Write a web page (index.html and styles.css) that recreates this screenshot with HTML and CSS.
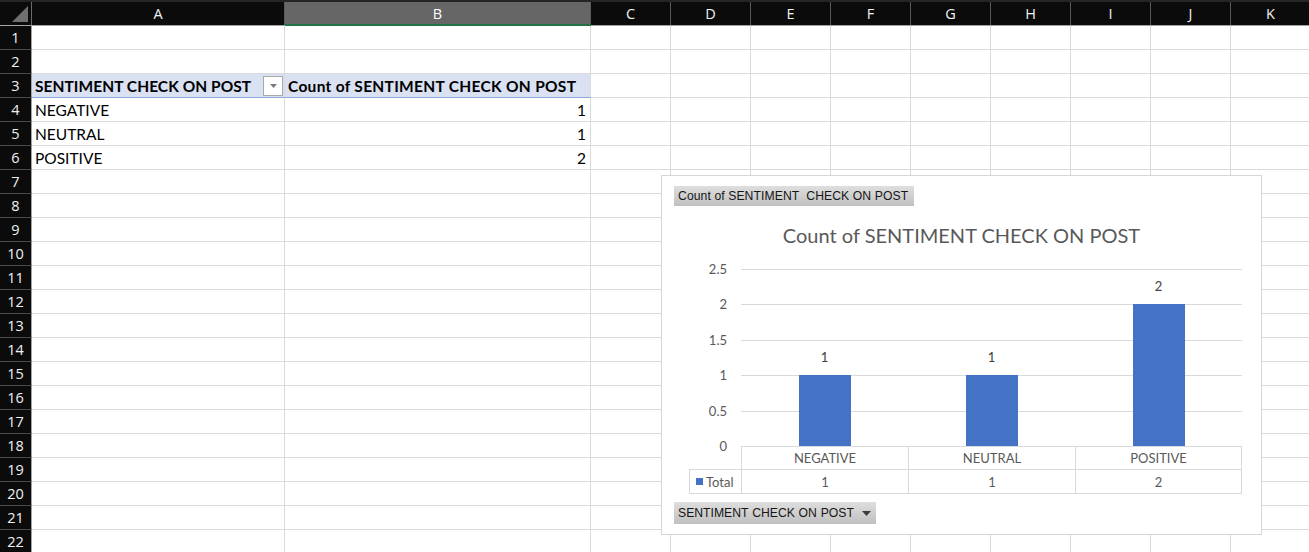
FILE: index.html
```html
<!DOCTYPE html>
<html>
<head>
<meta charset="utf-8">
<title>Sentiment pivot</title>
<link rel="stylesheet" href="styles.css">
</head>
<body>
<div class="sheet">
  <div class="hdr">
    <div class="corner"><svg width="31" height="23" viewBox="0 0 31 23"><polygon points="28,4 28,20 12,20" fill="#6f6f6f"/></svg></div>
    <div class="ch ca">A</div>
    <div class="ch cb sel">B</div>
    <div class="ch cn">C</div>
    <div class="ch cn">D</div>
    <div class="ch cn">E</div>
    <div class="ch cn">F</div>
    <div class="ch cn">G</div>
    <div class="ch cn">H</div>
    <div class="ch cn">I</div>
    <div class="ch cn">J</div>
    <div class="ch cn">K</div>
  </div>
  <div class="row"><div class="rh">1</div><div class="c ca"></div><div class="c cb"></div><div class="rest"></div></div>
  <div class="row"><div class="rh">2</div><div class="c ca"></div><div class="c cb"></div><div class="rest"></div></div>
  <div class="row"><div class="rh">3</div><div class="c ca pv">SENTIMENT CHECK ON POST<span class="filter"><svg width="7" height="4" viewBox="0 0 7 4"><polygon points="0,0 7,0 3.5,4" fill="#7a7a7a"/></svg></span></div><div class="c cb pv pvb">Count of SENTIMENT CHECK ON POST</div><div class="rest"></div></div>
  <div class="row"><div class="rh">4</div><div class="c ca">NEGATIVE</div><div class="c cb num">1</div><div class="rest"></div></div>
  <div class="row"><div class="rh">5</div><div class="c ca">NEUTRAL</div><div class="c cb num">1</div><div class="rest"></div></div>
  <div class="row"><div class="rh">6</div><div class="c ca">POSITIVE</div><div class="c cb num">2</div><div class="rest"></div></div>
  <div class="row"><div class="rh">7</div><div class="c ca"></div><div class="c cb"></div><div class="rest"></div></div>
  <div class="row"><div class="rh">8</div><div class="c ca"></div><div class="c cb"></div><div class="rest"></div></div>
  <div class="row"><div class="rh">9</div><div class="c ca"></div><div class="c cb"></div><div class="rest"></div></div>
  <div class="row"><div class="rh">10</div><div class="c ca"></div><div class="c cb"></div><div class="rest"></div></div>
  <div class="row"><div class="rh">11</div><div class="c ca"></div><div class="c cb"></div><div class="rest"></div></div>
  <div class="row"><div class="rh">12</div><div class="c ca"></div><div class="c cb"></div><div class="rest"></div></div>
  <div class="row"><div class="rh">13</div><div class="c ca"></div><div class="c cb"></div><div class="rest"></div></div>
  <div class="row"><div class="rh">14</div><div class="c ca"></div><div class="c cb"></div><div class="rest"></div></div>
  <div class="row"><div class="rh">15</div><div class="c ca"></div><div class="c cb"></div><div class="rest"></div></div>
  <div class="row"><div class="rh">16</div><div class="c ca"></div><div class="c cb"></div><div class="rest"></div></div>
  <div class="row"><div class="rh">17</div><div class="c ca"></div><div class="c cb"></div><div class="rest"></div></div>
  <div class="row"><div class="rh">18</div><div class="c ca"></div><div class="c cb"></div><div class="rest"></div></div>
  <div class="row"><div class="rh">19</div><div class="c ca"></div><div class="c cb"></div><div class="rest"></div></div>
  <div class="row"><div class="rh">20</div><div class="c ca"></div><div class="c cb"></div><div class="rest"></div></div>
  <div class="row"><div class="rh">21</div><div class="c ca"></div><div class="c cb"></div><div class="rest"></div></div>
  <div class="row"><div class="rh">22</div><div class="c ca"></div><div class="c cb"></div><div class="rest"></div></div>

  <div class="chart">
    <div class="fbtn">Count of SENTIMENT&nbsp; CHECK ON POST</div>
    <div class="title">Count of SENTIMENT CHECK ON POST</div>
    <div class="plot">
      <div class="yax"><span>2.5</span><span>2</span><span>1.5</span><span>1</span><span>0.5</span><span>0</span></div>
      <div class="area">
        <div class="gl"></div><div class="gl"></div><div class="gl"></div><div class="gl"></div><div class="gl"></div>
        <div class="bars">
          <div class="bcol"><span class="dl">1</span><div class="bar" style="height:71px"></div></div>
          <div class="bcol"><span class="dl">1</span><div class="bar" style="height:71px"></div></div>
          <div class="bcol"><span class="dl">2</span><div class="bar" style="height:142px"></div></div>
        </div>
      </div>
      <div class="blank"></div>
      <div class="tc">NEGATIVE</div>
      <div class="tc">NEUTRAL</div>
      <div class="tc last">POSITIVE</div>
      <div class="tc tr2 leg"><span class="sw"></span>Total</div>
      <div class="tc tr2">1</div>
      <div class="tc tr2">1</div>
      <div class="tc tr2 last">2</div>
    </div>
    <div class="fbtn fbtn2">SENTIMENT&nbsp; CHECK&nbsp; ON&nbsp; POST<svg class="dd" width="9" height="5" viewBox="0 0 9 5"><polygon points="0,0 9,0 4.5,5" fill="#3c3c3c"/></svg></div>
  </div>
</div>
</body>
</html>
```

FILE: styles.css
```css
* { box-sizing: border-box; margin: 0; padding: 0; }
body { margin: 0; background: #ffffff; overflow: hidden; font-family: Lato, "Liberation Sans", sans-serif; }

.sheet { position: relative; width: 1309px; height: 552px; overflow: hidden; background: #fff; }

/* column header */
.hdr { display: flex; height: 26px; background: #0b0b0b; border-top: 2px solid #252525; border-bottom: 1px solid #a3a3a3; }
.corner { width: 32px; flex: none; border-right: 1px solid #6a6a6a; }
.corner svg { display: block; }
.ch { display: flex; align-items: center; justify-content: center; font-family: "Open Sans", sans-serif; font-size: 14.5px; color: #f2f2f2; border-right: 1px solid #5a5a5a; }
.ch.sel { background: #666666; position: relative; color: #ffffff; }
.ch.sel::after { content: ""; position: absolute; left: 0; right: -1px; bottom: -1px; height: 2px; background: #217346; }
.ca { width: 253px; flex: none; }
.cb { width: 306px; flex: none; }
.cn { width: 80px; flex: none; }

/* rows */
.row { display: flex; height: 24px; }
.rh { width: 32px; flex: none; background: #0b0b0b; color: #f0f0f0; font-family: "Open Sans", sans-serif; font-size: 14.5px; display: flex; align-items: center; justify-content: center; border-right: 1px solid #a3a3a3; border-bottom: 1px solid #4a4a4a; }
.c { border-right: 1px solid #dadada; border-bottom: 1px solid #dadada; font-size: 15.5px; display: flex; align-items: center; padding: 1px 3px 0; color: #000; white-space: nowrap; }
.num { justify-content: flex-end; padding-right: 4px; }
.pv { background: #d9e1f2; border-bottom-color: #8ea9db; font-weight: 700; letter-spacing: 0.05px; }
.pvb { letter-spacing: 0.3px; }
.rest { flex: 1; border-bottom: 1px solid #dadada; background: repeating-linear-gradient(to right, transparent 0 79px, #dadada 79px 80px); }

.filter { margin-left: auto; margin-right: -2px; width: 20px; height: 20px; border: 1px solid #a9a9a9; background: #fff; display: flex; align-items: center; justify-content: center; }
.filter svg { display: block; }

/* chart */
.chart { position: absolute; left: 661px; top: 175px; width: 601px; height: 360px; background: #fff; border: 1px solid #d6d6d6; padding: 10px 12px; display: flex; flex-direction: column; align-items: flex-start; color: #595959; font-family: Lato, "Liberation Sans", sans-serif; }

.fbtn { height: 20px; padding: 0 6px 0 4px; font-family: "Liberation Sans", sans-serif; font-size: 12.2px; letter-spacing: 0.08px; color: #161616; background: linear-gradient(#dedede, #c0c0c0); display: flex; align-items: center; white-space: nowrap; }
.fbtn2 { height: 22px; margin-top: 8px; letter-spacing: 0; word-spacing: -1.5px; padding-right: 5px; }
.dd { margin-left: 8px; display: block; }

.title { align-self: stretch; text-align: center; font-size: 20px; line-height: 24px; margin-top: 17px; color: #595959; }

.plot { display: grid; grid-template-columns: 52px repeat(3, 167px); grid-template-rows: 177px 23px 25px; margin: 22px 0 0 15px; font-size: 13px; }
.yax { display: flex; flex-direction: column; justify-content: space-between; align-items: flex-end; padding-right: 14px; margin: -8px 0; line-height: 16px; color: #595959; }
.area { grid-column: 2 / 5; position: relative; display: flex; flex-direction: column; }
.gl { height: 35.4px; border-top: 1px solid #d9d9d9; flex: none; }
.bars { position: absolute; inset: 0; display: grid; grid-template-columns: repeat(3, 1fr); }
.bcol { display: flex; flex-direction: column; align-items: center; justify-content: flex-end; }
.dl { line-height: 16px; margin-bottom: 10px; color: #404040; }
.bar { width: 52px; background: #4472c4; }

.tc { border-top: 1px solid #d9d9d9; border-left: 1px solid #d9d9d9; display: flex; align-items: center; justify-content: center; color: #595959; }
.tc.last { border-right: 1px solid #d9d9d9; }
.tr2 { border-bottom: 1px solid #d9d9d9; }
.leg { justify-content: flex-start; padding-left: 6px; }
.sw { width: 7px; height: 7px; background: #4472c4; margin-right: 3px; }
```
